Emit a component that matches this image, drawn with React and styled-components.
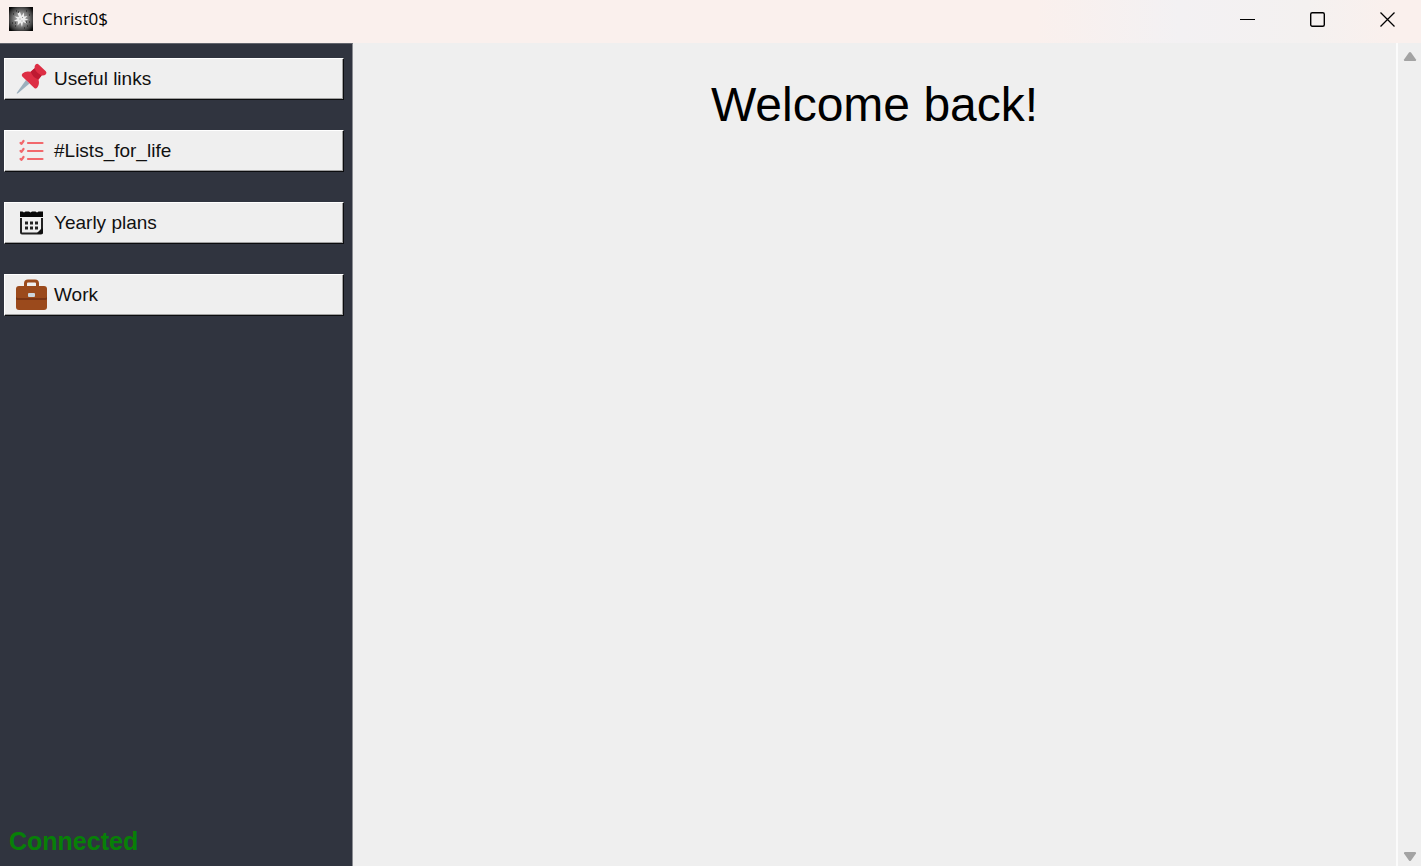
import React from "react";
import styled, { createGlobalStyle } from "styled-components";

const GlobalStyle = createGlobalStyle`
  * { box-sizing: border-box; }
  body { margin: 0; background: #efefef; }
`;

const Window = styled.div`
  display: flex;
  flex-direction: column;
  min-height: 100vh;
  background: #efefef;
  color: #000;
  font-family: "Liberation Sans", Arial, sans-serif;
`;

const TitleBar = styled.header`
  display: flex;
  align-items: center;
  height: 43px;
  padding: 0 0 5px 9px;
  background: linear-gradient(90deg, #faf0ed 0%, #faf0ed 73%, #f3f1f3 83%, #f4f1f0 92%, #faf0ed 98%);
`;

const AppTitle = styled.span`
  flex: 1;
  margin-left: 9px;
  font: 17px/24px "Open Sans", "Noto Sans", sans-serif;
`;

const CaptionButton = styled.button`
  display: grid;
  place-items: center;
  width: 70px;
  height: 38px;
  padding: 0;
  border: 0;
  background: none;
  &:last-child { width: 68px; }
`;

const Body = styled.div`
  display: flex;
  flex: 1;
`;

const Sidebar = styled.aside`
  display: flex;
  flex-direction: column;
  justify-content: space-between;
  flex: 0 0 353px;
  padding: 14px 8px 11px 4px;
  border-top: 1px solid #62656d;
  border-right: 1px solid #8a8c92;
  background: #30343f;
`;

const Nav = styled.nav`
  display: flex;
  flex-direction: column;
  gap: 30px;
`;

const NavButton = styled.button`
  display: flex;
  align-items: center;
  gap: 6px;
  height: 42px;
  padding: 0 10px;
  border: 1px solid;
  border-color: #fff #0b0c0e #0b0c0e #fff;
  box-shadow: inset -1px -1px 0 #a0a0a0;
  background: #efefef;
  color: #111;
  font: 19px/24px "Liberation Sans", Arial, sans-serif;
  text-align: left;
`;

const Icon = styled.svg`
  display: block;
  flex: none;
`;

const Status = styled.p`
  margin: 0 5px;
  color: #078007;
  font-weight: bold;
  font-size: 25px;
  line-height: 28px;
`;

const Content = styled.main`
  flex: 1;
  min-width: 0;
  padding: 34px 0 0;
  text-align: center;
`;

const Heading = styled.h1`
  margin: 0;
  font-weight: normal;
  font-size: 48px;
  line-height: 56px;
`;

const ScrollTrack = styled.div`
  display: flex;
  flex-direction: column;
  justify-content: space-between;
  align-items: center;
  flex: 0 0 25px;
  padding: 8px 0 4px;
  border-left: 2px solid #fbfbfb;
`;

const ScrollButton = styled.button`
  display: block;
  padding: 0;
  border: 0;
  background: none;
`;

const AppIcon = () => (
  <Icon width="24" height="24" viewBox="0 0 24 24" aria-hidden="true">
    <defs>
      <radialGradient id="glow">
        <stop offset="0" stopColor="#b5b5b5" />
        <stop offset="0.45" stopColor="#858585" />
        <stop offset="0.8" stopColor="#3c3c3c" />
        <stop offset="1" stopColor="#080808" />
      </radialGradient>
    </defs>
    <rect width="24" height="24" fill="#080808" />
    <circle cx="12" cy="12" r="15" fill="url(#glow)" />
    <path d="M11 5l1.500 4L15 5.500 15 9.500 18.500 9 16 11.500 19.500 12.500 15.500 13.500 17.500 16.500 14 15 13 20 11.500 15.500 8.500 18.500 9 14.500 5 13.500 8.500 12 5.500 9.500 10 10 8.500 6.500z" fill="#eee" />
    <path d="M10.500 12h1M13 10.500h1M12.500 14h1" stroke="#999" />
    <path d="M4 7h1M7 4h1M17 4h1M20 8h1M3 16h1M6 19h1M18 19h1M20 15h1M15 21h1M9 5h1M17 15h1M6 16h1" stroke="#181818" />
  </Icon>
);

const PinIcon = () => (
  <Icon width="33" height="32" viewBox="0 0 33 32" aria-hidden="true">
    <path d="M14.500 20.500L3 30.200q-1.800 1.200-1-.6L11 17z" fill="#9bafbd" />
    <path d="M20.800 1.300q1.400-1.200 2.800.1l7.200 6.800q1.300 1.500.1 3-1.700 1.600-4.200 1.200l-3.200 4.200q1.300 4.700-1.200 8-1.400 1.800-3 .4L7.300 13.400q-1.300-1.500.2-3 3.200-2.900 8.200-1.600l3.900-3.500q-.4-2.500 1.200-4z" fill="#dd2e44" />
    <path d="M19.600 5.300q1.700 4.900 7.100 7.100l-3.200 4.200q-5.800-1.900-7.800-7.800z" fill="#be1931" />
  </Icon>
);

const ListIcon = () => (
  <Icon width="33" height="32" viewBox="0 0 33 32" aria-hidden="true" fill="none" stroke="#f2686c" strokeWidth="2.200" strokeLinecap="round" strokeLinejoin="round">
    {[8, 16, 24].map((y) => (
      <path key={y} d={`M5.500 ${y}l1 .800L8.500 ${y - 2}M13 ${y}H27.500`} />
    ))}
  </Icon>
);

const CalendarIcon = () => (
  <Icon width="33" height="32" viewBox="0 0 33 32" aria-hidden="true">
    <path d="M5 4.500h2.500l1.500 1 1.500-1h3.500l1.500 1 1.500-1h3.500l1.500 1 1.500-1H28V10H5z" fill="#080808" />
    <path d="M6 11v14.500q0 1 1 1h19q1 0 1-1V11" fill="none" stroke="#222" strokeWidth="2" />
    <path d="M22.500 27v-1.500l4-4H28V26l-1 1z" fill="#111" />
    {[10, 15, 20].map((x) => (
      <path key={x} d={`M${x} 14.500h3v3h-3zM${x} 19.500h3v3h-3z`} fill="#222" />
    ))}
  </Icon>
);

const BriefcaseIcon = () => (
  <Icon width="33" height="32" viewBox="0 0 33 32" aria-hidden="true">
    <path d="M10.500 8V4.500q0-2.500 2.500-2.500h7q2.500 0 2.500 2.500V8" fill="none" stroke="#9b4a1c" strokeWidth="3" />
    <rect x="1" y="7" width="31" height="24" rx="3" fill="#9b4a1c" />
    <path d="M1 17.500q0 1.500 2 1.500h27q2 0 2-1.500v2q0 1.500-2 1.500H3q-2 0-2-1.500z" fill="#7b3514" />
    <rect x="13" y="14" width="7" height="4" rx="1" fill="#ccd6dd" />
  </Icon>
);

const LINKS = [
  { label: "Useful links", Glyph: PinIcon },
  { label: "#Lists_for_life", Glyph: ListIcon },
  { label: "Yearly plans", Glyph: CalendarIcon },
  { label: "Work", Glyph: BriefcaseIcon },
];

export default function App() {
  return (
    <Window>
      <GlobalStyle />
      <TitleBar>
        <AppIcon />
        <AppTitle>Christ0$</AppTitle>
        <CaptionButton aria-label="Minimize">
          <Icon width="16" height="16" viewBox="0 0 16 16"><path d="M0 8.500h15" stroke="#000" /></Icon>
        </CaptionButton>
        <CaptionButton aria-label="Maximize">
          <Icon width="16" height="16" viewBox="0 0 16 16"><rect x="0.700" y="1.700" width="13.600" height="13.600" rx="1.500" fill="none" stroke="#000" strokeWidth="1.400" /></Icon>
        </CaptionButton>
        <CaptionButton aria-label="Close">
          <Icon width="16" height="16" viewBox="0 0 16 16"><path d="M1.500 1.500l14 14M15.500 1.500l-14 14" stroke="#000" strokeWidth="1.300" /></Icon>
        </CaptionButton>
      </TitleBar>
      <Body>
        <Sidebar>
          <Nav>
            {LINKS.map(({ label, Glyph }) => (
              <NavButton key={label}>
                <Glyph />
                {label}
              </NavButton>
            ))}
          </Nav>
          <Status>Connected</Status>
        </Sidebar>
        <Content>
          <Heading>Welcome back!</Heading>
        </Content>
        <ScrollTrack>
          <ScrollButton aria-label="Scroll up">
            <Icon width="14" height="11" viewBox="0 0 14 11"><path d="M6 1.500q1-1.200 2 0l5 7q.6 1.500-1 1.500H2q-1.600 0-1-1.500z" fill="#a3a3a3" /></Icon>
          </ScrollButton>
          <ScrollButton aria-label="Scroll down">
            <Icon width="14" height="11" viewBox="0 0 14 11"><path d="M6 9.500q1 1.200 2 0l5-7q.6-1.500-1-1.500H2q-1.600 0-1 1.500z" fill="#a3a3a3" /></Icon>
          </ScrollButton>
        </ScrollTrack>
      </Body>
    </Window>
  );
}
